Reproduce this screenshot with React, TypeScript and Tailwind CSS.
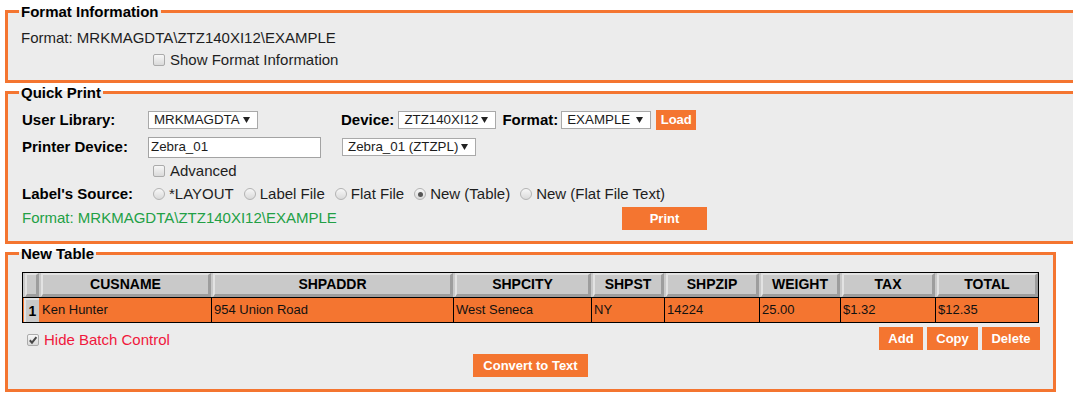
import React from 'react';

const cols = [
  { name: '', value: '1' },
  { name: 'CUSNAME', value: 'Ken Hunter' },
  { name: 'SHPADDR', value: '954 Union Road' },
  { name: 'SHPCITY', value: 'West Seneca' },
  { name: 'SHPST', value: 'NY' },
  { name: 'SHPZIP', value: '14224' },
  { name: 'WEIGHT', value: '25.00' },
  { name: 'TAX', value: '$1.32' },
  { name: 'TOTAL', value: '$12.35' },
];

const Caret: React.FC = () => (
  <svg width="7" height="6" viewBox="0 0 7 6" className="shrink-0">
    <path d="M0 0H7L3.5 6Z" fill="#222" />
  </svg>
);

const SelectBox: React.FC<{ value: string; className: string }> = ({ value, className }) => (
  <div
    className={`flex items-center justify-between h-[18px] border border-[#a9a9a9] bg-white pl-[5px] pr-[7px] text-[13.33px] text-[#1c1c1c] ${className}`}>
    <span>{value}</span>
    <Caret />
  </div>
);

const Check: React.FC<{ checked?: boolean }> = ({ checked }) => (
  <span className="inline-flex shrink-0 items-center justify-center w-[12px] h-[12px] rounded-[2px] border border-[#ababab] bg-linear-to-b from-[#f7f7f7] to-[#dadada]">
    {checked && (
      <svg width="10" height="10" viewBox="0 0 10 10">
        <path d="M1.8 5.2L4 7.6L8.4 2.2" stroke="#474747" strokeWidth="2" fill="none" />
      </svg>
    )}
  </span>
);

const Radio: React.FC<{ checked?: boolean }> = ({ checked }) => (
  <span className="inline-flex shrink-0 items-center justify-center w-[12px] h-[12px] rounded-full border border-[#b3b3b3] bg-linear-to-b from-[#f7f7f7] to-[#dadada]">
    {checked && <span className="w-[5px] h-[5px] rounded-full bg-[#555]" />}
  </span>
);

const Btn: React.FC<{ children: React.ReactNode; className?: string }> = ({ children, className }) => (
  <button className={`flex items-center justify-center bg-[#f47530] text-white font-bold text-[13px] ${className ?? ''}`}>
    {children}
  </button>
);

const Fieldset: React.FC<{ title: string; className: string; children: React.ReactNode }> = ({
  title,
  className,
  children,
}) => (
  <fieldset className={`ml-[5px] border-[3px] border-[#f47530] bg-[#ececec] pl-[11px] pr-[11px] ${className}`}>
    <legend className="px-[2px] text-[15px] leading-[17px] font-bold text-black">{title}</legend>
    {children}
  </fieldset>
);

const RadioItem: React.FC<{ label: string; checked?: boolean }> = ({ label, checked }) => (
  <span className="flex items-center mr-[10px]">
    <Radio checked={checked} />
    <span className="ml-[4px]">{label}</span>
  </span>
);

const App: React.FC = () => {
  return (
    <div className="w-[1073px] h-[415px] overflow-hidden bg-white pt-[3px] text-[15px] text-[#1e1e1e] font-['Liberation_Sans',Arial,sans-serif]">
      {/* Format Information */}
      <Fieldset title="Format Information" className="w-[1100px] pt-[7px] pb-[9px]">
        <div className="h-[22px] flex items-center pl-[2px]">Format: MRKMAGDTA\ZTZ140XI12\EXAMPLE</div>
        <div className="h-[22px] flex items-center pl-[134px]">
          <Check />
          <span className="ml-[5px]">Show Format Information</span>
        </div>
      </Fieldset>

      {/* Quick Print */}
      <Fieldset title="Quick Print" className="w-[1100px] mt-[1px] pt-[6px] pb-[11px]">
        <div className="ml-[3px]">
          <div className="h-[26px] flex items-center">
            <div className="w-[126px] font-bold text-black">User Library:</div>
            <div className="w-[193px]">
              <SelectBox value="MRKMAGDTA" className="w-[110px]" />
            </div>
            <span className="font-bold text-black">Device:</span>
            <SelectBox value="ZTZ140XI12" className="w-[98px] ml-[4px]" />
            <span className="font-bold text-black ml-[6px]">Format:</span>
            <SelectBox value="EXAMPLE" className="w-[90px] ml-[3px]" />
            <Btn className="w-[40px] h-[20px] ml-[5px]">Load</Btn>
          </div>
          <div className="h-[28px] flex items-center">
            <div className="w-[126px] font-bold text-black">Printer Device:</div>
            <div className="w-[193px]">
              <div className="w-[173px] h-[21px] flex items-center border border-[#a3a3a3] bg-white pl-[2px] text-[13.33px] text-[#1c1c1c]">
                Zebra_01
              </div>
            </div>
            <SelectBox value="Zebra_01 (ZTZPL)" className="w-[134px] ml-[1px]" />
          </div>
          <div className="h-[20px] flex items-center pl-[131px]">
            <Check />
            <span className="ml-[5px]">Advanced</span>
          </div>
          <div className="h-[26px] flex items-center">
            <div className="w-[131px] font-bold text-black">Label's Source:</div>
            <RadioItem label="*LAYOUT" />
            <RadioItem label="Label File" />
            <RadioItem label="Flat File" />
            <RadioItem label="New (Table)" checked />
            <RadioItem label="New (Flat File Text)" />
          </div>
          <div className="h-[23px] w-[685px] flex items-center">
            <span className="text-[#22a045]">Format: MRKMAGDTA\ZTZ140XI12\EXAMPLE</span>
            <Btn className="ml-auto w-[85px] h-[23px]">Print</Btn>
          </div>
        </div>
      </Fieldset>

      {/* New Table */}
      <Fieldset title="New Table" className="w-[1051px] mt-[1px] pt-[10px] pb-[12px]">
        <div className="ml-[3px] w-[1017px] border border-black">
          <div className="grid grid-cols-[16px_172px_242px_138px_73px_95px_81px_95px_103px] h-[25px] bg-[#c9c9c9] border-b border-black">
            {cols.map((c, i) => (
              <div
                key={c.name + i}
                className="ml-[2px] h-[24px] flex items-center justify-center border-t-2 border-l-2 border-r-[3px] border-b-[3px] border-t-[#e2e2e2] border-l-[#e2e2e2] border-r-[#9d9d9d] border-b-[#9d9d9d] text-[14px] font-bold text-black">
                {c.name}
              </div>
            ))}
          </div>
          <div className="grid grid-cols-[16px_172px_242px_138px_73px_95px_81px_95px_103px] h-[24px] bg-[#f47530]">
            {cols.map((c, i) =>
              i === 0 ? (
                <div
                  key="n"
                  className="ml-[1px] flex items-center justify-center bg-[#c9c9c9] border-l-2 border-t-2 border-l-[#e2e2e2] border-t-[#e2e2e2] text-[14px] font-bold text-black">
                  {c.value}
                </div>
              ) : (
                <div
                  key={c.name}
                  className={`flex items-center text-[13px] text-[#111] ${i === 1 ? 'pl-[3px]' : 'pl-[2px] border-l border-black'}`}>
                  {c.value}
                </div>
              ),
            )}
          </div>
        </div>
        <div className="ml-[3px] w-[1017px] mt-[4px] h-[23px] flex items-center justify-between">
          <div className="flex items-center pl-[5px] pt-[3px]">
            <Check checked />
            <span className="ml-[5px] text-[#f0183c]">Hide Batch Control</span>
          </div>
          <div className="flex items-center gap-[4px] mr-[-1px]">
            <Btn className="w-[44px] h-[23px]">Add</Btn>
            <Btn className="w-[51px] h-[23px]">Copy</Btn>
            <Btn className="w-[58px] h-[23px]">Delete</Btn>
          </div>
        </div>
        <div className="mt-[4px] flex justify-center">
          <Btn className="w-[115px] h-[23px]">Convert to Text</Btn>
        </div>
      </Fieldset>
    </div>
  );
};

export default App;
